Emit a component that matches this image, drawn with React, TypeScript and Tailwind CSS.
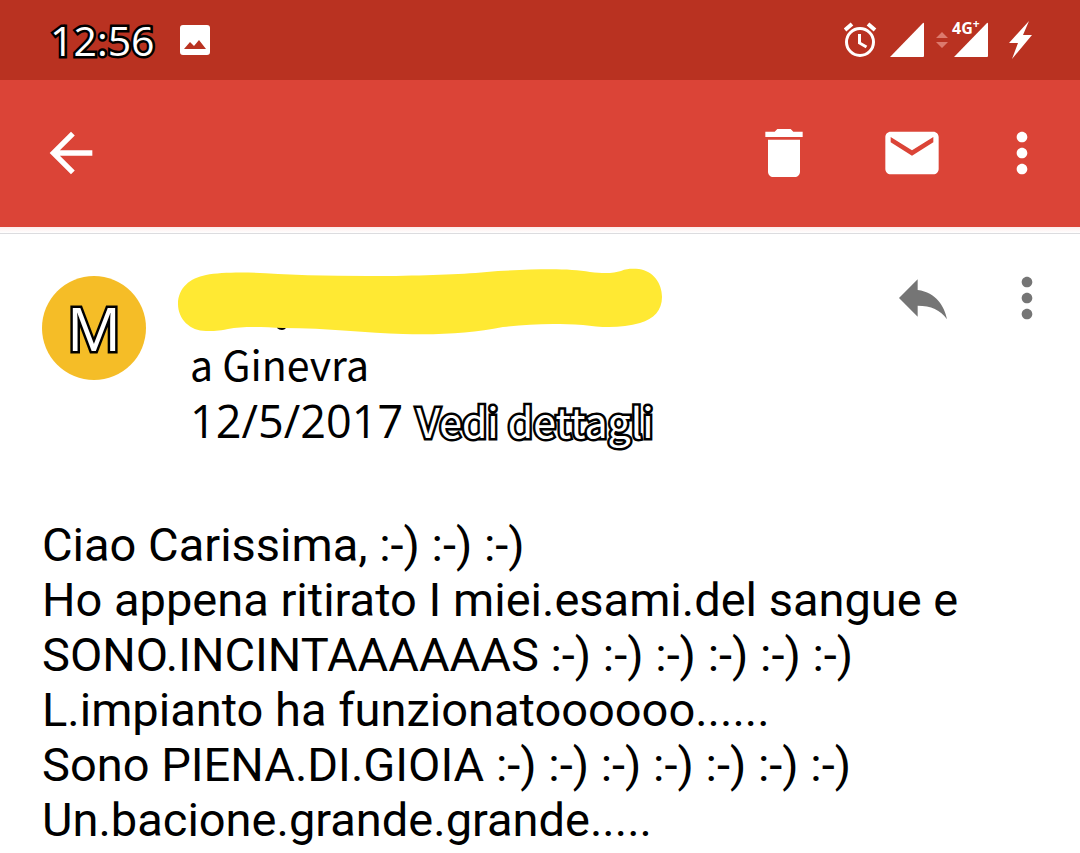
import type { ReactNode } from 'react';

const SLATE = "font-['Noto_Sans_CJK_JP','Noto_Sans',sans-serif]";
const HUMANIST = "font-['Open_Sans','Noto_Sans',sans-serif]";
const OUTLINED = 'text-white [paint-order:stroke_fill] [stroke-linejoin:round] [-webkit-text-stroke:5px_black]';

const message = [
  'Ciao Carissima, :-) :-) :-)',
  'Ho appena ritirato I miei.esami.del sangue e',
  'SONO.INCINTAAAAAAS :-) :-) :-) :-) :-) :-)',
  'L.impianto ha funzionatoooooo......',
  'Sono PIENA.DI.GIOIA :-) :-) :-) :-) :-) :-) :-)',
  'Un.bacione.grande.grande.....',
];

const icons = {
  back: 'M20 11H7.83l5.59-5.59L12 4l-8 8 8 8 1.41-1.41L7.83 13H20v-2z',
  trash: 'M6 19c0 1.1.9 2 2 2h8c1.1 0 2-.9 2-2V7H6v12zM19 4h-3.5l-1-1h-5l-1 1H5v2h14V4z',
  mail: 'M20 4H4c-1.1 0-2 .9-2 2v12c0 1.1.9 2 2 2h16c1.1 0 2-.9 2-2V6c0-1.1-.9-2-2-2zm0 4l-8 5-8-5V6l8 5 8-5v2z',
  more: 'M12 8c1.1 0 2-.9 2-2s-.9-2-2-2-2 .9-2 2 .9 2 2 2zm0 2c-1.1 0-2 .9-2 2s.9 2 2 2 2-.9 2-2-.9-2-2-2zm0 6c-1.1 0-2 .9-2 2s.9 2 2 2 2-.9 2-2-.9-2-2-2z',
  reply: 'M10 9V5l-7 7 7 7v-4.1c5 0 8.5 1.6 11 5.1-1-5-4-10-11-11z',
};

function IconButton({ label, path }: { label: string; path: string }) {
  return (
    <button type="button" aria-label={label} className="size-16 shrink-0">
      <svg viewBox="0 0 24 24" className="size-16" fill="currentColor">
        <path d={path} />
      </svg>
    </button>
  );
}

function Signal({ children }: { children?: ReactNode }) {
  return (
    <div className="relative">
      <svg viewBox="0 0 36 36" className="size-9" fill="currentColor">
        <path d="M0 35 L33 1 Q34 0 34 2 V34 Q34 35 33 35 Z" />
      </svg>
      {children}
    </div>
  );
}

function StatusBar() {
  return (
    <div className="flex h-20 items-center bg-[#b93221] pr-[46px] pl-[50px] text-white">
      <time className={`${HUMANIST} ${OUTLINED} text-[41px] leading-[57px]`}>12:56</time>
      <svg viewBox="0 0 32 32" className="ml-6 size-8" fill="currentColor">
        <path
          fillRule="evenodd"
          d="M4 1h24q3 0 3 3v24q0 3-3 3H4q-3 0-3-3V4q0-3 3-3zM5 25h22l-7-9-5 6-4-4z"
        />
      </svg>

      <div className="ml-auto flex items-center">
        <svg viewBox="0 0 34 36" className="h-9 w-[34px]" fill="none" stroke="currentColor" strokeWidth="3">
          <circle cx="16" cy="20" r="13.5" />
          <path d="M15.5 12v9l7 4" />
          <path d="M1 8l7-6M31 8l-7-6" strokeWidth="4" />
        </svg>
        <div className="ml-3">
          <Signal />
        </div>
        <svg viewBox="0 0 12 18" className="mx-2.5 h-[18px] w-3 text-[#dc7a6d]" fill="currentColor">
          <path d="M0 7l6-6 6 6zM0 11h12l-6 6z" />
        </svg>
        <div className="-ml-1">
          <Signal>
            <span className={`${HUMANIST} absolute -top-1.5 -left-0.5 flex text-base leading-6 font-bold`}>
              4G<sup className="top-0 text-xs leading-4 font-bold">+</sup>
            </span>
          </Signal>
        </div>
        <svg viewBox="0 0 26 40" className="ml-[18px] h-10 w-[26px]" fill="currentColor">
          <path d="M21 1 L1 23 H10 L4 39 L24 15 H15 Z" />
        </svg>
      </div>
    </div>
  );
}

function Toolbar() {
  return (
    <header className="flex h-[147px] items-center bg-[#db4437] pr-[26px] pb-0.5 pl-[39px] text-white">
      <IconButton label="Indietro" path={icons.back} />
      <div className="ml-auto flex items-center">
        <IconButton label="Elimina" path={icons.trash} />
        <div className="mr-[46px] ml-16 flex">
          <IconButton label="Segna come da leggere" path={icons.mail} />
        </div>
        <IconButton label="Altre opzioni" path={icons.more} />
      </div>
    </header>
  );
}

// Sender name covered by a marker stroke
function RedactedSender() {
  return (
    <svg viewBox="0 0 484 67" className="block h-[67px] w-[484px]">
      <path d="M99 54h11q-1 8-6 8-3 0-5-2z" fill="#000" />
      <path
        d="M28 63C12 63 0 51 0 36C0 20 12 10 28 7C45 4 70 4 100 6C140 8 180 8 218 8C262 7 290 6 320 3C360 1 390 0 412 4C428 6 436 5 443 3C450 0 456 1 461 1C475 3 484 15 484 29C484 42 476 51 462 55C445 60 425 60 405 57C375 55 350 56 325 59C295 65 265 67 225 66C190 65 150 60 105 60C85 59 65 58 50 61C40 63 36 63 28 63Z"
        fill="#ffe933"
      />
    </svg>
  );
}

export default function App() {
  return (
    <div className="min-h-screen bg-white text-black">
      <StatusBar />
      <Toolbar />
      <div className="h-[7px] border-b border-[#dcdcdf] bg-linear-to-b from-[#fdecea] to-white" />

      <main>
        <section className="flex items-start pt-8 pr-[21px] pl-[42px]">
          <div className="mt-2.5 flex size-[104px] shrink-0 items-center justify-center rounded-full bg-[#f5bd27]">
            <span className={`${HUMANIST} ${OUTLINED} text-[60px] leading-[60px]`}>M</span>
          </div>
          <div className={`${SLATE} mt-0.5 ml-8 text-[41px] leading-[57px]`}>
            <RedactedSender />
            <p className="pl-3">a Ginevra</p>
            <p className="pl-3">
              <time dateTime="2017-05-12" className={`${HUMANIST} mr-1 text-[45px] leading-none`}>
                12/5/2017
              </time>{' '}
              <a href="#dettagli" className={OUTLINED}>
                Vedi dettagli
              </a>
            </p>
          </div>
          <div className="ml-auto flex gap-10 text-[#757575]">
            <IconButton label="Rispondi" path={icons.reply} />
            <IconButton label="Altro" path={icons.more} />
          </div>
        </section>

        <article className="px-[42px] pt-[68px] font-[Roboto,sans-serif] text-[47px] leading-[55px]">
          {message.map((line) => (
            <p key={line}>{line}</p>
          ))}
        </article>
      </main>
    </div>
  );
}
